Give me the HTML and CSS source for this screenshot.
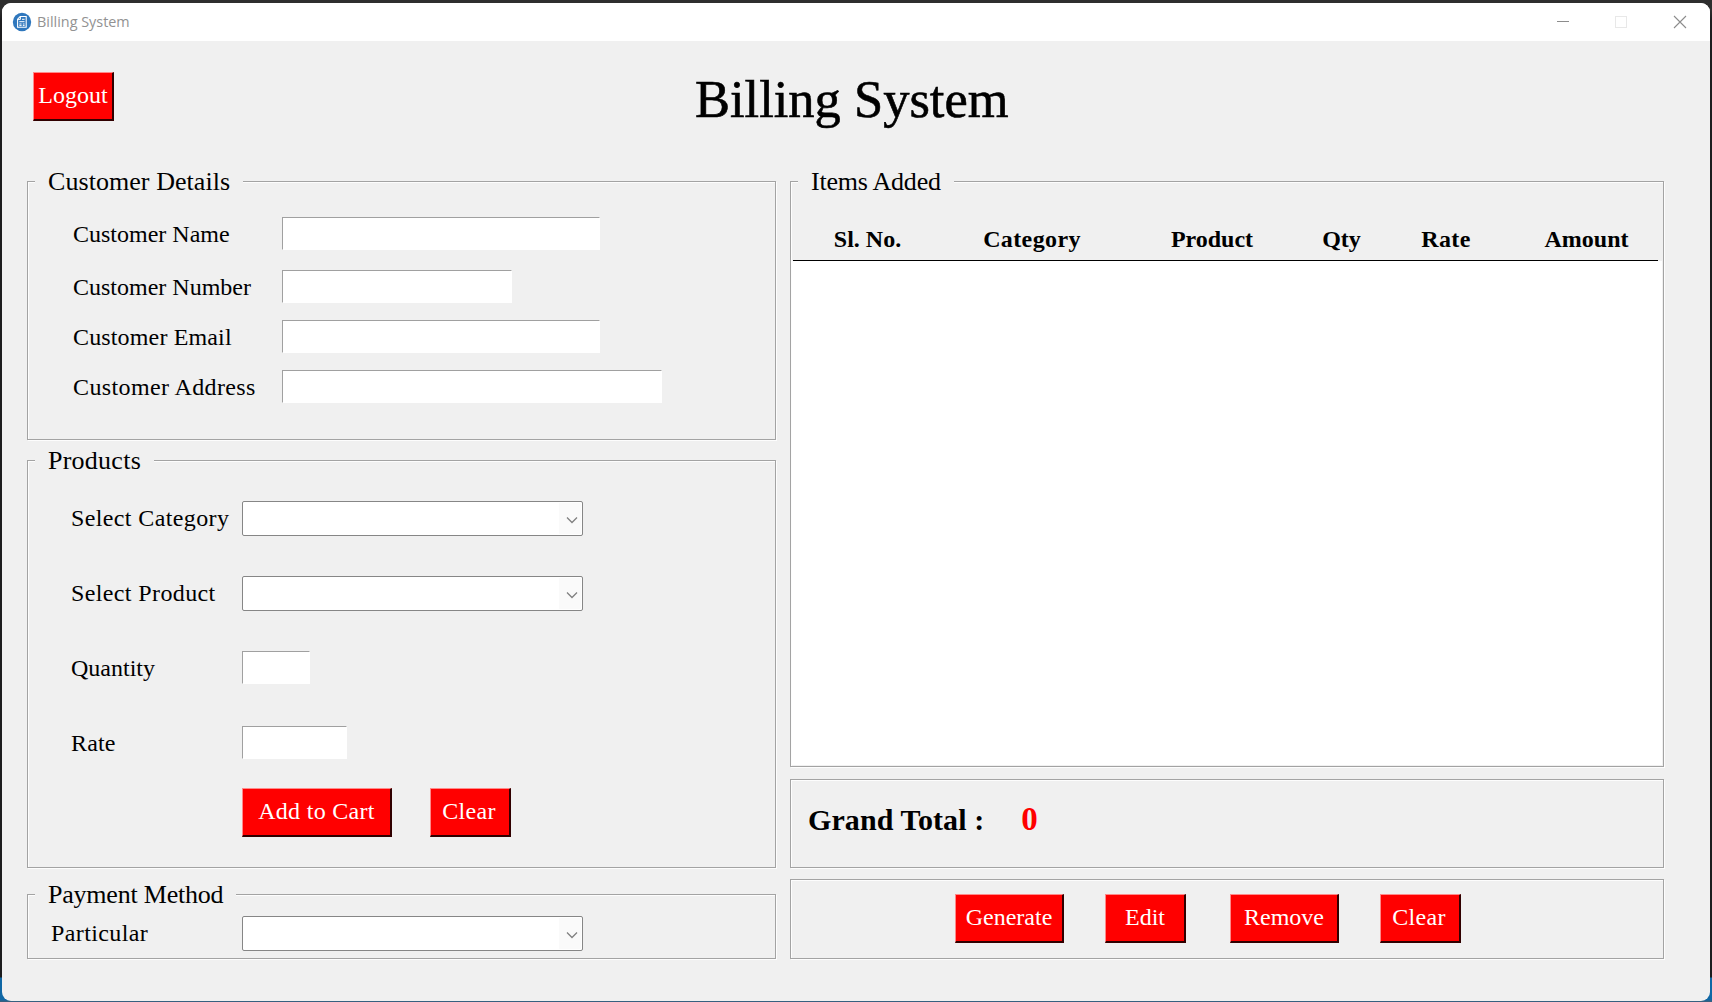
FILE: index.html
```html
<!DOCTYPE html>
<html lang="en">
<head>
<meta charset="utf-8">
<title>Billing System</title>
<link rel="stylesheet" href="styles.css">
</head>
<body>
<div class="window">
  <header class="titlebar">
    <svg class="app-icon" width="20" height="20" viewBox="0 0 20 20">
      <circle cx="10" cy="10" r="9.2" fill="#2f77bd"/>
      <path d="M8.2 4.500h6v10.700H5.600V7.200z" fill="none" stroke="#fff" stroke-width="1.100"/>
      <path d="M8.400 4.800v2.600H5.800M10 7.300h2.600M7.300 9.700h5.200M7.300 12h2.300M10.800 12h1.800M7.300 13.600h2.300M10.800 13.600h1.800" fill="none" stroke="#fff" stroke-width="1"/>
    </svg>
    <span class="window-title">Billing System</span>
    <svg class="window-controls" width="132" height="14" viewBox="0 0 132 14" fill="none">
      <path d="M1 6.500h12" stroke="#8c8c8c"/>
      <rect x="59.500" y="1.500" width="11" height="11" stroke="#e8e8e8"/>
      <path d="M118 1l12 12M130 1l-12 12" stroke="#8c8c8c" stroke-width="1.100"/>
    </svg>
  </header>

  <div class="banner">
    <button class="btn">Logout</button>
    <h1 class="heading">Billing System</h1>
  </div>

  <main class="columns">
    <div class="left">
      <section class="panel customer">
        <h2 class="legend">Customer Details</h2>
        <div class="form customer-form">
          <label>Customer Name</label><input class="entry entry-name">
          <label>Customer Number</label><input class="entry entry-number">
          <label class="spaced">Customer Email</label><input class="entry entry-email">
          <label class="spaced-wide">Customer Address</label><input class="entry entry-address">
        </div>
      </section>

      <section class="panel products">
        <h2 class="legend legend-loose">Products</h2>
        <div class="form product-form">
          <label class="spaced-wide">Select Category</label>
          <div class="combo"><span class="combo-arrow"><svg width="12" height="8" viewBox="0 0 12 8"><path d="M1 1.500l5 5 5-5" fill="none" stroke="#808080" stroke-width="1.300"/></svg></span></div>
          <label class="spaced-wide">Select Product</label>
          <div class="combo"><span class="combo-arrow"><svg width="12" height="8" viewBox="0 0 12 8"><path d="M1 1.500l5 5 5-5" fill="none" stroke="#808080" stroke-width="1.300"/></svg></span></div>
          <label>Quantity</label><input class="entry entry-quantity">
          <label class="spaced">Rate</label><input class="entry entry-rate">
        </div>
        <div class="product-actions">
          <button class="btn btn-cart">Add to Cart</button>
          <button class="btn btn-clear">Clear</button>
        </div>
      </section>

      <section class="panel payment">
        <h2 class="legend legend-tight">Payment Method</h2>
        <div class="form payment-form">
          <label class="spaced-wide">Particular</label>
          <div class="combo"><span class="combo-arrow"><svg width="12" height="8" viewBox="0 0 12 8"><path d="M1 1.500l5 5 5-5" fill="none" stroke="#808080" stroke-width="1.300"/></svg></span></div>
        </div>
      </section>
    </div>

    <div class="right">
      <section class="panel items">
        <h2 class="legend legend-tight">Items Added</h2>
        <div class="items-head">
          <span>Sl. No.</span><span class="spaced-wide">Category</span><span>Product</span><span>Qty</span><span class="spaced-wide">Rate</span><span>Amount</span>
        </div>
        <div class="items-body"></div>
      </section>
      <section class="panel total">
        <span class="total-label">Grand Total :</span>
        <span class="total-value">0</span>
      </section>
      <section class="panel actions">
        <button class="btn btn-wide">Generate</button>
        <button class="btn">Edit</button>
        <button class="btn btn-wide">Remove</button>
        <button class="btn btn-clear">Clear</button>
      </section>
    </div>
  </main>
</div>
</body>
</html>
```
FILE: styles.css
```css
* { box-sizing: border-box; }

body {
  margin: 0;
  width: 1712px;
  height: 1002px;
  padding: 3px 2px 1px;
  overflow: hidden;
  background: linear-gradient(#2e2e2e 0, #2e2e2e 10px, #1c1c1e 20px, #1c1c1e 977px, #0f67a5 978px, #0f67a5 1000px, #37607f 1001px);
  font-family: "Liberation Serif", "Times New Roman", serif;
  font-size: 24px;
  color: #000;
}

.window {
  height: 998px;
  border-radius: 9px;
  overflow: hidden;
  background: #f0f0f0;
}

.titlebar {
  display: flex;
  align-items: center;
  height: 38px;
  padding: 0 22px 0 10px;
  background: #fff;
}

.app-icon { margin-top: -1px; }

.window-title {
  margin-left: 5px;
  font: 14.4px/20px "Open Sans", "Noto Sans", sans-serif;
  color: #929292;
}

.window-controls { margin: 0 0 0 auto; }

.banner {
  display: flex;
  align-items: flex-start;
  height: 140px;
  padding: 31px 0 0 31px;
}

.heading {
  margin: -3px 0 0 581px;
  font-size: 52.5px;
  font-weight: 400;
  line-height: 60px;
  -webkit-text-stroke: 0.6px #000;
}

.btn {
  width: 81px;
  height: 49px;
  padding: 0 0 2px;
  border: solid;
  border-width: 1px 2px 2px 1px;
  border-color: #ff8a8a #300000 #300000 #ff8a8a;
  background: #f00;
  color: #fff;
  font: inherit;
  line-height: 28px;
  text-align: center;
  white-space: nowrap;
}

.btn-cart { width: 150px; letter-spacing: 0.3px; }
.btn-clear { padding-right: 2px; letter-spacing: 0.3px; }
.btn-wide { width: 109px; }

.spaced { letter-spacing: 0.15px; }
.spaced-wide { letter-spacing: 0.38px; }

.columns {
  display: flex;
  gap: 14px;
  padding-left: 25px;
}

.left { width: 749px; }
.right { width: 874px; }

.panel {
  display: flex;
  flex-direction: column;
  border: 1px solid #a3a3a3;
  box-shadow: 1px 1px 0 #fdfdfd, inset 1px 1px 0 #fdfdfd;
}

.legend {
  align-self: flex-start;
  margin: -15px 0 -1px 7px;
  padding: 0 13px;
  background: #f0f0f0;
  font-size: 26px;
  font-weight: 400;
  line-height: 30px;
  letter-spacing: 0.06px;
}

.legend-loose { letter-spacing: 0.25px; }
.legend-tight { letter-spacing: -0.22px; }

.customer { height: 259px; }
.products { height: 408px; margin-top: 20px; }
.payment { height: 65px; margin-top: 26px; }

.form {
  display: grid;
  align-items: start;
}

.customer-form {
  grid-template-columns: 209px 1fr;
  grid-template-rows: 53px 50px 50px 33px;
  padding: 21px 0 0 45px;
  line-height: 34px;
}

.product-form {
  grid-template-columns: 171px 1fr;
  grid-template-rows: repeat(4, 75px);
  padding: 26px 0 0 43px;
  line-height: 34px;
}

.payment-form {
  grid-template-columns: 191px 1fr;
  padding: 7px 0 0 23px;
  line-height: 34px;
}

.entry {
  height: 33px;
  padding: 0 4px;
  border: solid #fff;
  border-width: 1px;
  border-top-color: #a0a0a0;
  border-left-color: #a0a0a0;
  background: #fff;
  font: inherit;
}

.entry-name, .entry-email { width: 318px; }
.entry-number { width: 230px; }
.entry-address { width: 380px; }
.entry-quantity { width: 68px; }
.entry-rate { width: 105px; }

.combo {
  display: flex;
  justify-content: flex-end;
  width: 341px;
  height: 35px;
  padding: 1px;
  border: 1px solid #868686;
  border-radius: 2px;
  background: #fff;
}

.combo-arrow {
  display: flex;
  align-items: center;
  justify-content: center;
  width: 22px;
  padding: 2px 0 0 3px;
  background: #fafafa;
}

.product-actions {
  display: flex;
  gap: 38px;
  margin: -13px 0 0 214px;
}

.items { height: 586px; }

.items-head {
  display: grid;
  grid-template-columns: 149px 180px 180px 79px 130px 146px;
  height: 65px;
  margin: 0 5px 0 2px;
  padding-top: 29px;
  border-bottom: 1px solid #000;
  font-weight: 700;
  line-height: 28px;
  text-align: center;
}

.items-head span:last-child { padding-left: 5px; }

.items-body {
  flex: 1;
  margin: 0 1px 1px;
  background: #fff;
}

.total {
  flex-direction: row;
  align-items: baseline;
  height: 89px;
  margin-top: 12px;
  padding: 21px 0 0 17px;
  font-weight: 700;
}

.total-label { font-size: 30px; letter-spacing: 0.1px; }

.total-value {
  margin-left: 37px;
  font-size: 33px;
  color: #f00;
}

.actions {
  display: grid;
  grid-template-columns: 150px 125px 150px 81px;
  align-items: start;
  height: 80px;
  margin-top: 11px;
  padding: 14px 0 0 164px;
}
```
